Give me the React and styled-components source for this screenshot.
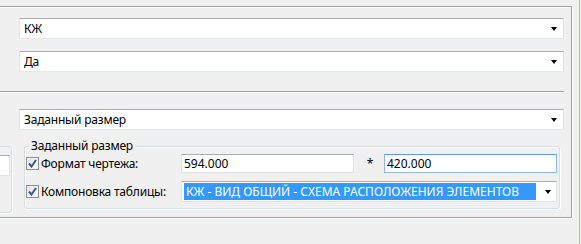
import React from 'react';
import styled, { createGlobalStyle } from 'styled-components';

const Global = createGlobalStyle`
  html, body { margin: 0; padding: 0; background: #f0f0f0; }
  body {
    font-family: "Noto Sans", "Liberation Sans", sans-serif;
    font-size: 12px;
    color: #000;
  }
  * { box-sizing: border-box; }
`;

const Page = styled.div`
  width: 580px;
  height: 244px;
  border-right: 1px solid #a9b9d0;
  overflow: hidden;
  padding-top: 6px;
`;

const Frame = styled.div`
  margin-left: -20px;
  width: 592px;
  height: 212px;
  border: 1px solid #a0a0a0;
  box-shadow: inset 1px 1px 0 #fff, 1px 1px 0 #fff;
  padding: 11px 0 0 38px;
`;

const Combo = styled.div`
  display: flex;
  align-items: center;
  width: ${p => p.$w || 545}px;
  height: 21px;
  margin-top: ${p => p.$mt || 0}px;
  background: #fff;
  border: 1px solid #e2e3ea;
  border-top-color: #abadb3;
  border-bottom-color: #e3e9ef;
  padding: 0 6px 0 4px;
  line-height: 16px;
  white-space: nowrap;
`;

const ComboText = styled.span`
  flex: 1;
  overflow: hidden;
  letter-spacing: -0.2px;
`;

const Arrow = styled.span`
  width: 0;
  height: 0;
  border-left: 3.5px solid transparent;
  border-right: 3.5px solid transparent;
  border-top: 4px solid #000;
  margin-top: 1px;
`;

const Separator = styled.div`
  margin: 19px 0 0 -38px;
  width: 583px;
  height: 2px;
  border-top: 1px solid #a0a0a0;
  border-bottom: 1px solid #fff;
`;

const BottomRow = styled.div`
  display: flex;
  align-items: flex-start;
  margin: 16px 0 0 -38px;
`;

const LeftBox = styled.div`
  width: 31px;
  height: 67px;
  border: 1px solid #d5dfe5;
  border-radius: 3px;
  box-shadow: 1px 1px 0 #fff;
  padding: 8px 1px 0 0;
`;

const LeftInput = styled.div`
  height: 21px;
  background: #fff;
  border: 1px solid #e2e3ea;
  border-top-color: #abadb3;
`;

const Group = styled.div`
  position: relative;
  margin-left: 12px;
  width: 536px;
  height: 63px;
  border: 1px solid #d5dfe5;
  border-radius: 3px;
  box-shadow: inset 1px 1px 0 #fff, 1px 1px 0 #fff;
  padding: 7px 0 0 1px;
`;

const Legend = styled.span`
  position: absolute;
  top: -9px;
  left: 4px;
  padding: 0 2px;
  background: #f0f0f0;
  line-height: 16px;
  letter-spacing: -0.2px;
`;

const FieldRow = styled.div`
  display: flex;
  align-items: center;
  height: ${p => p.$h}px;
  margin-top: ${p => p.$mt || 0}px;
`;

const CheckLabel = styled.label`
  display: flex;
  align-items: center;
  gap: 2px;
  width: 155px;
  line-height: 16px;
  letter-spacing: -0.2px;
`;

const Box = styled.span`
  display: flex;
  align-items: center;
  justify-content: center;
  width: 13px;
  height: 13px;
  border: 1px solid #8f8f8f;
  background: linear-gradient(135deg, #dcdcdc 0%, #f6f6f6 60%, #fff 100%);
  box-shadow: inset 0 0 0 1px #f4f4f4;
`;

const Input = styled.div`
  width: 173px;
  height: 19px;
  background: #fff;
  border: 1px solid ${p => (p.$focus ? '#8fb8e8' : '#e2e3ea')};
  border-top-color: ${p => (p.$focus ? '#5a9ee6' : '#abadb3')};
  padding: 0 2px;
  line-height: 17px;
`;

const Star = styled.span`
  width: 30px;
  text-align: center;
  padding-left: 2px;
`;

const SelCombo = styled.div`
  display: flex;
  align-items: center;
  width: 376px;
  height: 21px;
  background: #fff;
  border: 1px solid #e2e3ea;
  border-top-color: #abadb3;
  padding: 1px 5px 1px 2px;
  white-space: nowrap;
`;

const Selection = styled.span`
  flex: 1;
  align-self: stretch;
  background: #3399ff;
  color: #fff;
  padding-left: 2px;
  line-height: 17px;
  margin-right: 9px;
  overflow: hidden;
`;

const Check = () => (
  <Box>
    <svg width="9" height="9" viewBox="0 0 9 9">
      <path d="M1 4.5 L3.5 7.5 L8 1" fill="none" stroke="#3f5596" strokeWidth="2" />
    </svg>
  </Box>
);

export default function App() {
  return (
    <>
      <Global />
      <Page>
        <Frame>
          <Combo><ComboText>КЖ</ComboText><Arrow /></Combo>
          <Combo $mt={12}><ComboText>Да</ComboText><Arrow /></Combo>
          <Separator />
          <Combo $mt={16}><ComboText>Заданный размер</ComboText><Arrow /></Combo>
          <BottomRow>
            <LeftBox><LeftInput /></LeftBox>
            <Group>
              <Legend>Заданный размер</Legend>
              <FieldRow $h={19}>
                <CheckLabel><Check />Формат чертежа:</CheckLabel>
                <Input>594.000</Input>
                <Star>*</Star>
                <Input $focus>420.000</Input>
              </FieldRow>
              <FieldRow $h={21} $mt={8}>
                <CheckLabel><Check />Компоновка таблицы:</CheckLabel>
                <SelCombo>
                  <Selection>КЖ - ВИД ОБЩИЙ - СХЕМА РАСПОЛОЖЕНИЯ ЭЛЕМЕНТОВ</Selection>
                  <Arrow />
                </SelCombo>
              </FieldRow>
            </Group>
          </BottomRow>
        </Frame>
      </Page>
    </>
  );
}
